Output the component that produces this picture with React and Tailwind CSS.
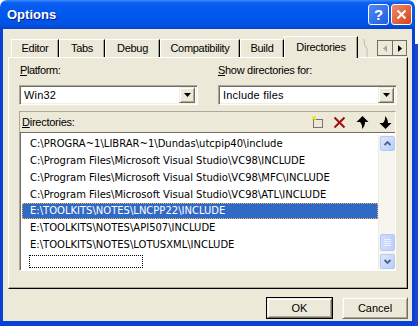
import React from "react";

const dirs = [
  "C:\\PROGRA~1\\LIBRAR~1\\Dundas\\utcpip40\\include",
  "C:\\Program Files\\Microsoft Visual Studio\\VC98\\INCLUDE",
  "C:\\Program Files\\Microsoft Visual Studio\\VC98\\MFC\\INCLUDE",
  "C:\\Program Files\\Microsoft Visual Studio\\VC98\\ATL\\INCLUDE",
  "E:\\TOOLKITS\\NOTES\\LNCPP22\\INCLUDE",
  "E:\\TOOLKITS\\NOTES\\API507\\INCLUDE",
  "E:\\TOOLKITS\\NOTES\\LOTUSXML\\INCLUDE",
];

const tabs = [
  { name: "Editor", w: "w-[48px]" },
  { name: "Tabs", w: "w-[46px]" },
  { name: "Debug", w: "w-[55px]" },
  { name: "Compatibility", w: "w-[80px]" },
  { name: "Build", w: "w-[44px]" },
];

// classic 3d borders
const sunken =
  "border border-t-[#aca899] border-l-[#aca899] border-r-white border-b-white shadow-[inset_1px_1px_0_#716f64,inset_-1px_-1px_0_#f1efe2]";
const raised =
  "border border-t-[#f1efe2] border-l-[#f1efe2] border-r-[#716f64] border-b-[#716f64] shadow-[inset_1px_1px_0_#ffffff,inset_-1px_-1px_0_#aca899]";

const Combo = ({ value }) => {
  return (
    <div className={"w-[179px] h-[20px] bg-white flex items-center pl-[4px] pr-[2px] " + sunken}>
      <span className="flex-1 leading-none tracking-[0.2px]">{value}</span>
      <div className={"w-[16px] h-[16px] bg-[#ece9d8] flex items-center justify-center " + raised}>
        <svg width="7" height="4" viewBox="0 0 7 4">
          <path d="M0 0h7L3.5 4z" fill="#000" />
        </svg>
      </div>
    </div>
  );
};

const ScrollBtn = ({ up }) => {
  return (
    <div className="w-[15px] h-[15px] rounded-[2px] border border-[#b7c8f0] bg-[linear-gradient(135deg,#dde7fd,#b9cdfa)] flex items-center justify-center">
      <svg width="7" height="5" viewBox="0 0 7 5">
        <path d={up ? "M0.5 4L3.5 1L6.5 4" : "M0.5 1L3.5 4L6.5 1"} stroke="#4d6185" strokeWidth="1.8" fill="none" />
      </svg>
    </div>
  );
};

const App = () => {
  return (
    <div className="w-[418px] h-[326px] flex overflow-hidden font-['Liberation_Sans',Arial,sans-serif] text-[11px] text-black">
      <div className="w-[415px] h-full flex flex-col">

        {/* title bar */}
        <div className="h-[29px] rounded-t-[7px] bg-[linear-gradient(to_bottom,#3a8cfb_0%,#0a5df0_10%,#0058ee_50%,#0052e4_85%,#0342c8_100%)] flex items-center pl-[7px] pr-[3px]">
          <span className="flex-1 text-white font-bold text-[13px] [text-shadow:1px_1px_0_#0a1f80]">Options</span>
          <div className="w-[21px] h-[21px] rounded-[3px] border border-white bg-[linear-gradient(135deg,#4f8bf6,#1f5ce0)] flex items-center justify-center text-white font-bold text-[15px] leading-none">?</div>
          <div className="w-[21px] h-[21px] ml-[2px] rounded-[3px] border border-white bg-[linear-gradient(135deg,#ee8a68,#d4431c)] flex items-center justify-center">
            <svg width="11" height="11" viewBox="0 0 11 11">
              <path d="M1.5 1.5L9.5 9.5M9.5 1.5L1.5 9.5" stroke="#fff" strokeWidth="2" />
            </svg>
          </div>
        </div>

        {/* body */}
        <div className="flex-1 flex flex-col bg-[#ece9d8] border-x-[3px] border-b-[5px] border-[#0842d4]">

          {/* tabs */}
          <div className="ml-[5px] mt-[7px] w-[400px] h-[21px] flex items-end pl-[3px] relative z-10 tracking-[-0.3px]">
            {tabs.map((t) => {
              return (
                <div key={t.name} className={"h-[18px] flex items-center justify-center border-t border-l border-t-white border-l-white border-r border-r-[#000] shadow-[inset_-1px_0_0_#aca899] " + t.w}>
                  {t.name}
                </div>
              );
            })}
            <div className="w-[74px] h-[22px] -mb-px bg-[#ece9d8] flex items-center justify-center border-t border-l border-t-white border-l-white border-r border-r-[#000] shadow-[inset_-1px_0_0_#aca899]">
              Directories
            </div>
            <div className="w-[19px] h-[18px] flex items-start pl-[4px]">
              <svg width="10" height="18" viewBox="0 0 10 18">
                <path d="M1 0 C4 3 1 5 4 8 C7 11 3 13 6 18" stroke="#bdbab0" fill="none" />
              </svg>
            </div>
            <div className="flex mb-[1px]">
              <div className="w-[15px] h-[16px] border border-[#716f64] border-r-0 flex items-center justify-center bg-[#ece9d8]">
                <svg width="4" height="7" viewBox="0 0 4 7"><path d="M4 0v7L0 3.5z" fill="#aca899" /></svg>
              </div>
              <div className="w-[15px] h-[16px] border border-[#716f64] flex items-center justify-center bg-[#ece9d8]">
                <svg width="4" height="7" viewBox="0 0 4 7"><path d="M0 0v7L4 3.5z" fill="#000" /></svg>
              </div>
            </div>
          </div>

          {/* panel */}
          <div className="ml-[5px] w-[400px] h-[232px] border-t border-l border-t-white border-l-white border-r border-b border-r-black border-b-black shadow-[inset_-1px_-1px_0_#aca899] flex flex-col px-[10px] pt-[6px]">
            <div className="flex gap-[20px]">
              <div className="flex flex-col">
                <span className="h-[13px] leading-[13px] pl-[1px] tracking-[-0.4px]"><u>P</u>latform:</span>
                <div className="mt-[8px]"><Combo value="Win32" /></div>
              </div>
              <div className="flex flex-col">
                <span className="h-[13px] leading-[13px] tracking-[-0.3px]"><u>S</u>how directories for:</span>
                <div className="mt-[8px]"><Combo value="Include files" /></div>
              </div>
            </div>

            {/* directories box */}
            <div className="mt-[6px] w-[377px] h-[160px] flex flex-col border border-t-[#aca899] border-l-[#aca899] border-r-white border-b-white">
              <div className="h-[20px] flex items-center pl-[2px] pr-[3px]">
                <span className="flex-1 tracking-[-0.25px]"><u>D</u>irectories:</span>
                <div className="flex items-center">
                  <svg width="13" height="13" viewBox="0 0 13 13">
                    <rect x="2.5" y="3.5" width="9" height="8" fill="none" stroke="#000" strokeDasharray="1 1" />
                    <path d="M3 0v4M1 2h4M1 0l4 4M5 0L1 4" stroke="#f0e020" strokeWidth="1" />
                  </svg>
                  <svg className="ml-[9px]" width="13" height="13" viewBox="0 0 13 13">
                    <path d="M1.5 1.5L11.5 11.5M11.5 1.5L1.5 11.5" stroke="#a01010" strokeWidth="2" />
                  </svg>
                  <svg className="ml-[10px]" width="13" height="13" viewBox="0 0 13 13">
                    <path d="M6.5 0L12.5 6H9C9 9 8 11 6 13C6.5 11 6 8 4 6H0.5z" fill="#000" />
                  </svg>
                  <svg className="ml-[10px]" width="13" height="13" viewBox="0 0 13 13">
                    <path d="M6.5 13L12.5 7H9C9 4 8 2 6 0C6.5 2 6 5 4 7H0.5z" fill="#000" />
                  </svg>
                </div>
              </div>

              {/* list */}
              <div className="flex-1 flex bg-white border-t border-l border-[#716f64] overflow-hidden pt-[2px] pl-px">
                <div className="flex-1 flex flex-col font-['DejaVu_Sans',sans-serif] text-[10px]">
                  {dirs.map((d, i) => {
                    return (
                      <div key={i} className={`h-[17px] flex items-center pl-[8px] whitespace-nowrap ${i === 4 ? "bg-[#316ac5] text-white outline outline-1 outline-dotted outline-[#e8b45a] -outline-offset-1" : ""}`}>
                        {d}
                      </div>
                    );
                  })}
                  <div className="h-[17px] flex items-center pl-[7px]">
                    <div className="w-[114px] h-[13px] border border-dotted border-black"></div>
                  </div>
                </div>
                {/* scrollbar */}
                <div className="w-[17px] bg-[#f6f5f0] border-l border-[#eeede5] flex flex-col items-center pt-px pb-[1px]">
                  <ScrollBtn up />
                  <div className="flex-1 flex flex-col justify-end items-center pb-[3px]">
                    <div className="w-[15px] h-[17px] rounded-[2px] border border-[#b7c8f0] bg-[linear-gradient(90deg,#cfdcfd,#bccffb)] flex flex-col items-center justify-center gap-px">
                      <div className="w-[7px] h-px bg-[#eef3ff]"></div>
                      <div className="w-[7px] h-px bg-[#eef3ff]"></div>
                      <div className="w-[7px] h-px bg-[#eef3ff]"></div>
                      <div className="w-[7px] h-px bg-[#eef3ff]"></div>
                    </div>
                  </div>
                  <ScrollBtn />
                </div>
              </div>
            </div>
          </div>

          {/* buttons */}
          <div className="mt-[8px] flex justify-end gap-[9px] pr-[4px]">
            <div className="w-[67px] h-[22px] border border-black">
              <div className={"w-full h-full flex items-center justify-center bg-[#ece9d8] " + raised}>OK</div>
            </div>
            <div className={"w-[66px] h-[22px] flex items-center justify-center bg-[#ece9d8] " + raised}>Cancel</div>
          </div>
        </div>
      </div>

      {/* background to the right of the dialog */}
      <div className="flex-1 flex flex-col">
        <div className="h-[44px] bg-white"></div>
        <div className="flex-1 bg-[#1d49c9]"></div>
      </div>
    </div>
  );
};

export default App;
